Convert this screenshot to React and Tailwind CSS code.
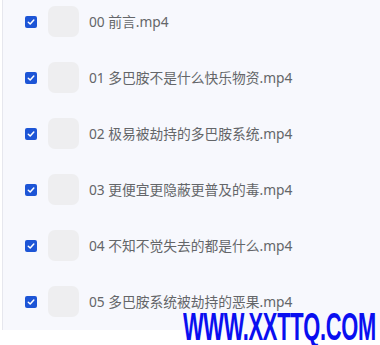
import React from 'react';

const files = [
    '00 前言.mp4',
    '01 多巴胺不是什么快乐物资.mp4',
    '02 极易被劫持的多巴胺系统.mp4',
    '03 更便宜更隐蔽更普及的毒.mp4',
    '04 不知不觉失去的都是什么.mp4',
    '05 多巴胺系统被劫持的恶果.mp4',
];

// Checked checkbox drawn by hand
const Check = () => (
    <span className="flex h-[12px] w-[12px] shrink-0 items-center justify-center rounded-[2px] bg-[#1d55d6]">
        <svg width="8" height="8" viewBox="0 0 8 8" fill="none">
            <path d="M1.3 4.2 L3.2 6 L6.8 2" stroke="white" strokeWidth="1.5" strokeLinecap="round" strokeLinejoin="round" />
        </svg>
    </span>
);

function App() {
    return (
        <div className="relative h-[345px] w-[380px] overflow-hidden bg-white pl-[2px]" style={{ fontFamily: '"Noto Sans", "Noto Sans CJK SC", sans-serif' }}>
            <div className="flex flex-col gap-[25px] border-l border-[#e6e7ee] bg-[#f7f8fd] pb-[13px] pl-[22px] pt-[6px]">
                {files.map((name) => (
                    <div key={name} className="flex h-[31px] items-center">
                        <Check />
                        <div className="ml-[11px] h-[31px] w-[31px] shrink-0 rounded-[7px] bg-[#eeeef0]"></div>
                        <span className="ml-[10px] text-[13.75px] leading-none text-[#646669]">{name}</span>
                    </div>
                ))}
            </div>

            {/* watermark */}
            <div
                className="absolute left-[183px] top-[308px] origin-left scale-x-[0.575] whitespace-nowrap text-[38px] font-bold leading-none tracking-[-0.5px] text-[#0a0ff0]"
                style={{ fontFamily: '"Liberation Sans", Arial, sans-serif' }}
            >
                WWW.XXTTQ.COM
            </div>
        </div>
    );
}

export default App;
